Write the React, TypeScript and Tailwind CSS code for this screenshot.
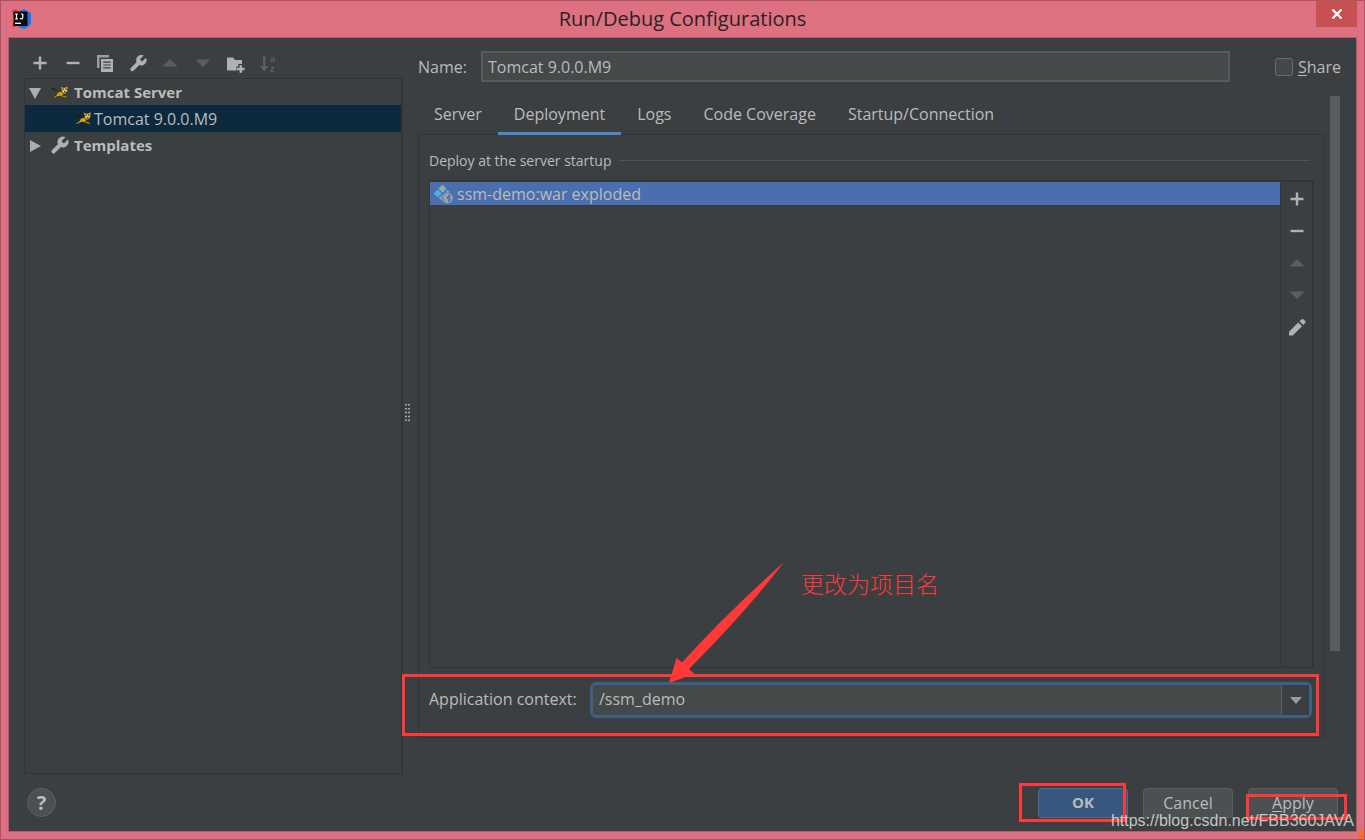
import React, { useState } from 'react';

interface IconProps {
  className?: string;
}

const tabs = ['Server', 'Deployment', 'Logs', 'Code Coverage', 'Startup/Connection'];

const AppLogo = () => (
  <svg width="20" height="20" viewBox="0 0 20 20" aria-hidden="true">
    <path d="M1 1l4-1 4 3-3 14-5 2 1-5-2-3 2-3z" fill="#fe315d" />
    <path d="M0 10l3-2 2 7-3-1z" fill="#f97a12" />
    <path d="M9 2l4-2 3 2 4 2v11l-5 4-2 1-5-2z" fill="#087cfa" />
    <rect x="2.500" y="2.500" width="14" height="14.500" fill="#0b0b0b" />
    <path d="M4 5h3M5.500 5v5M4 10h3M9 9.300c1.500 1.300 2.800.500 2.800-1V5M9.800 5h2" fill="none" stroke="#fff" strokeWidth="1.200" />
    <path d="M4 14.300h6" stroke="#fff" strokeWidth="1.300" />
  </svg>
);

const PlusIcon = ({ className = '' }: IconProps) => (
  <svg className={className} width="20" height="20" viewBox="0 0 20 20" aria-hidden="true">
    <path d="M10 3.500v13M3.500 10h13" stroke="#afb1b3" strokeWidth="2.400" />
  </svg>
);

const MinusIcon = ({ className = '' }: IconProps) => (
  <svg className={className} width="20" height="20" viewBox="0 0 20 20" aria-hidden="true">
    <path d="M3.500 10h13" stroke="#afb1b3" strokeWidth="2.400" />
  </svg>
);

const UpIcon = () => (
  <svg width="20" height="20" viewBox="0 0 20 20" aria-hidden="true">
    <path d="M10 6l7.500 7.500h-15z" fill="#5b5d5f" />
  </svg>
);

const DownIcon = () => (
  <svg width="20" height="20" viewBox="0 0 20 20" aria-hidden="true">
    <path d="M10 14l7.500-7.500h-15z" fill="#5b5d5f" />
  </svg>
);

const CopyIcon = () => (
  <svg width="20" height="20" viewBox="0 0 20 20" aria-hidden="true">
    <path d="M2 2h12v2.500H4.500V15H2z" fill="#9a9da0" />
    <path d="M6 6h12v13H6z" fill="#afb1b3" />
    <path d="M8.300 9.200h7.400M8.300 12h7.400M8.300 14.800h7.400" stroke="#3c3f41" strokeWidth="1.200" />
  </svg>
);

const WrenchIcon = () => (
  <svg width="21" height="21" viewBox="0 0 24 24" aria-hidden="true">
    <path
      d="M14.700 6.300a1 1 0 0 0 0 1.400l1.600 1.600a1 1 0 0 0 1.400 0l3.770-3.770a6 6 0 0 1-7.940 7.940l-6.910 6.910a2.120 2.120 0 0 1-3-3l6.910-6.910a6 6 0 0 1 7.940-7.940l-3.760 3.760z"
      fill="#afb1b3"
      stroke="#afb1b3"
      strokeWidth=".6"
    />
  </svg>
);

const FolderIcon = () => (
  <svg width="20" height="20" viewBox="0 0 20 20" aria-hidden="true">
    <path d="M2 4.500h6l2 2.500h7v10.500H2z" fill="#afb1b3" />
    <path d="M15.800 11v9M11.500 16h9" stroke="#3c3f41" strokeWidth="5" />
    <path d="M15.800 12.200v7.600M12 16h7.600" stroke="#afb1b3" strokeWidth="2.400" />
  </svg>
);

const SortIcon = () => (
  <svg width="20" height="20" viewBox="0 0 20 20" aria-hidden="true" className="font-['Liberation_Sans',Arial,sans-serif]">
    <path d="M6.200 3.500V15" stroke="#5e6062" strokeWidth="2.200" />
    <path d="M1.800 13h8.800l-4.400 5.200z" fill="#5e6062" />
    <text x="12" y="8.500" fontSize="9" fontWeight="700" fill="#5e6062">a</text>
    <text x="12" y="18.500" fontSize="9" fontWeight="700" fill="#5e6062">z</text>
  </svg>
);

const PencilIcon = () => (
  <svg width="20" height="20" viewBox="0 0 20 20" aria-hidden="true">
    <path d="M2 18.500v-3.800l9.200-9.200 3.800 3.800-9.200 9.200z" fill="#afb1b3" />
    <path d="M12.500 4.300l1.900-1.900c.7-.7 1.500-.7 2.200 0l1.500 1.500c.7.700.7 1.500 0 2.200l-1.900 1.900z" fill="#afb1b3" />
  </svg>
);

const TomcatIcon = () => (
  <svg width="18" height="15" viewBox="0 0 18 15" aria-hidden="true">
    <path d="M1 3l2 1.500 3 1" fill="none" stroke="#1c1a12" strokeWidth="1.200" />
    <path d="M1 12.500l4-2 1.500-3L11 6l2 2.500-1.500 2 3.500.5 2 2.500-4-1-4-1.500-2.500.5-3 1.500z" fill="#d6a01c" stroke="#2b2410" strokeWidth=".7" />
    <path d="M9.500 1l2 1.300h3L17 .8l-.4 5.400-2.600 3-3-1.700z" fill="#e9c75a" stroke="#2b2410" strokeWidth=".7" />
    <path d="M11.500 4.200h1.300M14.300 4.200h1.300M13 6.800h1.500" stroke="#1c1a12" strokeWidth="1.200" />
  </svg>
);

const ArtifactIcon = () => (
  <svg width="20" height="20" viewBox="0 0 20 20" aria-hidden="true">
    <path d="M8.500.8l4 4-4 4-4-4z" fill="#9aa7b0" />
    <path d="M3.800 5.500l4 4-4 4-4-4z" fill="#40b6e0" />
    <path d="M13.300 5.800l3.200 2.800c-2-.9-4.300-.7-6 .3z" fill="#40b6e0" />
    <path d="M8.500 10.200c-1.400 2-1.400 4.600-.2 6.800l-3.500-3.200z" fill="#9aa7b0" />
    <circle cx="13.500" cy="14" r="4.800" fill="#4b6eaf" stroke="#9aa7b0" strokeWidth="1.200" />
    <path d="M10 11.500l3.500-1.700 1.500 1.600-2.600 1.500.3 1.800 2.200.6-1.400 3.200c-2.500-.6-4.300-3.500-3.500-7zM16 12l2 1-.6 3-1.700-2z" fill="#9aa7b0" />
  </svg>
);

interface ToolButtonProps {
  label: string;
  disabled?: boolean;
  children: React.ReactNode;
}

const ToolButton = ({ label, disabled = false, children }: ToolButtonProps) => (
  <button type="button" aria-label={label} disabled={disabled} className="flex h-5 w-5 items-center justify-center">
    {children}
  </button>
);

const TitleBar = () => (
  <header className="grid h-9 grid-cols-[1fr_auto_1fr]">
    <div className="flex items-center pl-[10px]">
      <AppLogo />
    </div>
    <h1 className="self-center text-xl leading-7 text-[#2b2226]">Run/Debug Configurations</h1>
    <div className="flex items-start justify-end pr-[7px]">
      <button type="button" aria-label="Close" className="flex h-[26px] w-[41px] items-center justify-center bg-[#c75050]">
        <svg width="12" height="10" viewBox="0 0 12 10" aria-hidden="true">
          <path d="M1.500.5l9 9M10.500.5l-9 9" stroke="#fff" strokeWidth="2.200" />
        </svg>
      </button>
    </div>
  </header>
);

const ConfigTree = () => (
  <aside className="flex w-[394px] shrink-0 flex-col pl-[15px]">
    <div className="flex h-10 w-[254px] items-end justify-between pb-[5px] pl-[6px]">
      <ToolButton label="Add"><PlusIcon /></ToolButton>
      <ToolButton label="Remove"><MinusIcon /></ToolButton>
      <ToolButton label="Copy"><CopyIcon /></ToolButton>
      <ToolButton label="Edit templates"><WrenchIcon /></ToolButton>
      <ToolButton label="Move up" disabled><UpIcon /></ToolButton>
      <ToolButton label="Move down" disabled><DownIcon /></ToolButton>
      <ToolButton label="New folder"><FolderIcon /></ToolButton>
      <ToolButton label="Sort" disabled><SortIcon /></ToolButton>
    </div>
    <ul role="tree" className="flex-1 border border-r-2 border-[#323435]">
      <li role="treeitem" aria-expanded="true">
        <div className="flex h-[26px] items-center pl-1 text-[15px] font-bold">
          <svg width="12" height="12" viewBox="0 0 12 12" className="mr-[10px] mt-1" aria-hidden="true">
            <path d="M0 0h12L6 11z" fill="#adadad" />
          </svg>
          <TomcatIcon />
          <span className="ml-[5px]">Tomcat Server</span>
        </div>
        <ul role="group">
          <li role="treeitem" aria-selected="true" className="flex h-[27px] items-center bg-[#0d293e] pl-[49px]">
            <TomcatIcon />
            <span className="ml-[2px]">Tomcat 9.0.0.M9</span>
          </li>
        </ul>
      </li>
      <li role="treeitem" aria-expanded="false">
        <div className="flex h-[27px] items-center pl-1 text-[15px] font-bold">
          <svg width="12" height="12" viewBox="0 0 12 12" className="mr-2" aria-hidden="true">
            <path d="M1 0v12l11-6z" fill="#adadad" />
          </svg>
          <WrenchIcon />
          <span className="ml-1">Templates</span>
        </div>
      </li>
    </ul>
  </aside>
);

const Splitter = () => (
  <div role="separator" className="mt-[14px] flex w-[15px] shrink-0 items-center pl-px">
    <svg width="8" height="20" viewBox="0 0 8 20" aria-hidden="true">
      <path d="M2 1v19M5 1v19" stroke="#a5a8a9" strokeWidth="2" strokeDasharray="1.500 2.400" />
    </svg>
  </div>
);

const DeployList = () => (
  <div className="flex min-h-40 flex-1 border border-r-2 border-t-2 border-[#323435]">
    <ul role="listbox" aria-label="Artifacts" className="flex-1">
      <li role="option" aria-selected="true" className="flex h-[23px] items-center gap-[3px] bg-[#4b6eaf] pl-1">
        <ArtifactIcon />
        ssm-demo:war exploded
      </li>
    </ul>
    <div className="flex w-8 flex-col items-center gap-3 border-l border-[#323435] pt-[7px]">
      <ToolButton label="Add artifact"><PlusIcon /></ToolButton>
      <ToolButton label="Remove artifact"><MinusIcon /></ToolButton>
      <ToolButton label="Move artifact up" disabled><UpIcon /></ToolButton>
      <ToolButton label="Move artifact down" disabled><DownIcon /></ToolButton>
      <ToolButton label="Edit artifact"><PencilIcon /></ToolButton>
    </div>
  </div>
);

const ContextRow = () => {
  const [context, setContext] = useState('/ssm_demo');

  return (
    <div className="relative mt-[14px] flex h-9 items-center pr-[2px]">
      <label htmlFor="context" className="w-[161px] shrink-0 pb-[2px]">Application context:</label>
      <div className="flex h-9 flex-1 rounded-md border-[3px] border-[#3d6185] bg-[#45494a]">
        <input
          id="context"
          value={context}
          onChange={(e) => setContext(e.target.value)}
          className="min-w-0 flex-1 px-[6px] pb-[2px] outline-none"
        />
        <button type="button" aria-label="Show contexts" className="flex w-7 items-center justify-center border-l border-[#646464] bg-[#3c3f41]">
          <svg width="12" height="7" viewBox="0 0 12 7" aria-hidden="true">
            <path d="M0 0h12L6 7z" fill="#9a9da0" />
          </svg>
        </button>
      </div>

      {/* callout over the field */}
      <div className="pointer-events-none absolute -bottom-[18px] -left-[27px] -right-[5px] -top-2 border-[3px] border-[#ff3838]" />
      <svg className="pointer-events-none absolute bottom-[34px] left-[239px]" width="118" height="122" viewBox="0 0 118 122" aria-hidden="true">
        <path d="M1 121L8.500 96l5.500 4.500Q56 54 116 0 80 48 21 107l5.500 5z" fill="#ff3838" />
      </svg>
      <p className="pointer-events-none absolute bottom-[119px] left-[372px] whitespace-nowrap font-['Noto_Sans_CJK_SC',sans-serif] text-[23px] leading-8 font-light text-[#ff3838]">
        更改为项目名
      </p>
    </div>
  );
};

const SettingsPane = () => {
  const [active, setActive] = useState('Deployment');
  const [name, setName] = useState('Tomcat 9.0.0.M9');

  return (
    <main className="flex min-w-0 flex-1 flex-col pt-[13px]">
      <div className="flex h-[31px] items-center pr-[15px]">
        <label htmlFor="name" className="w-[63px]">Name:</label>
        <input
          id="name"
          value={name}
          onChange={(e) => setName(e.target.value)}
          className="h-[31px] min-w-0 flex-1 border-2 border-[#585b5c] bg-[#45494a] px-[5px] outline-none"
        />
        <label className="ml-[45px] flex items-center gap-[5px]">
          <input type="checkbox" className="h-[18px] w-[18px] appearance-none rounded-[3px] border border-[#6b6b6b] bg-[#43494a]" />
          <span><u className="underline-offset-2">S</u>hare</span>
        </label>
      </div>

      <div className="mb-9 mt-[14px] flex flex-1 gap-[6px] pr-4">
        <div className="flex min-w-0 flex-1 flex-col">
          <div role="tablist" className="-mb-px flex h-[39px]">
            {tabs.map((tab) => (
              <button
                key={tab}
                type="button"
                role="tab"
                aria-selected={tab === active}
                onClick={() => setActive(tab)}
                className={`relative border-b-[3px] px-4 pb-px ${tab === active ? 'border-[#4a88c7]' : 'border-transparent'}`}
              >
                {tab}
              </button>
            ))}
          </div>
          <section className="flex flex-1 flex-col border border-[#323435] pb-[19px] pl-[10px] pr-[9px]">
            <div className="flex h-[45px] items-center gap-2 pr-1 pt-[6px]">
              <h2 className="text-sm">Deploy at the server startup</h2>
              <div className="h-px flex-1 bg-[#515456]" />
            </div>
            <DeployList />
            <ContextRow />
          </section>
        </div>
        <div className="h-[555px] w-[10px] bg-[#595b5d]" />
      </div>
    </main>
  );
};

const Footer = () => (
  <footer className="relative flex h-[57px] items-center gap-[15px] pl-[18px] pr-[18px]">
    <button type="button" aria-label="Help" className="mr-auto flex h-[29px] w-[29px] items-center justify-center rounded-full border border-[#5e6060] bg-[#4c5052] text-xl font-bold leading-5">
      ?
    </button>
    <div className="relative">
      <button type="button" className="h-[30px] w-[90px] rounded border border-[#4c708c] bg-[#365880] text-[15px] font-bold">OK</button>
      <div className="pointer-events-none absolute -bottom-1 -left-[19px] -top-[5px] right-[2px] border-[3px] border-[#ff3838]" />
    </div>
    <button type="button" className="h-[30px] w-[90px] rounded border border-[#5e6060] bg-[#4c5052]">Cancel</button>
    <div className="relative">
      <button type="button" className="h-[30px] w-[90px] rounded border border-[#5e6060] bg-[#4c5052]">
        <u className="underline-offset-2">A</u>pply
      </button>
      <div className="pointer-events-none absolute -bottom-[2px] -left-[2px] -right-[9px] top-[6px] border-[3px] border-[#ff3838]" />
    </div>
    <p className="pointer-events-none absolute bottom-0 right-[2px] font-['Liberation_Sans',Arial,sans-serif] leading-5 text-white/70">
      https://blog.csdn.net/FBB360JAVA
    </p>
  </footer>
);

export default function App() {
  return (
    <div className="relative flex min-h-screen flex-col overflow-hidden border border-[#a95563] bg-[#dd7081] font-['Open_Sans','Noto_Sans_CJK_SC',sans-serif] text-base text-[#bbbbbb]">
      <TitleBar />
      <div className="mx-[7px] mb-[7px] flex flex-1 flex-col border border-[#b55a69] bg-[#3c3f41]">
        <div className="flex flex-1">
          <ConfigTree />
          <Splitter />
          <SettingsPane />
        </div>
        <Footer />
      </div>
      <div className="absolute -bottom-2 -right-2 h-[18px] w-[14px] rounded-full bg-[#fc6a30]" />
    </div>
  );
}
